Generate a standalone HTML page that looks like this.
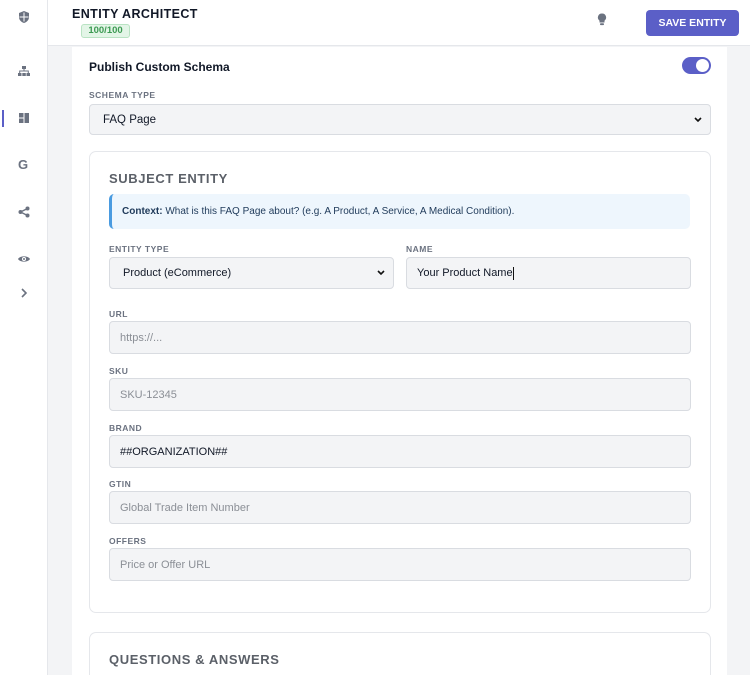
<!DOCTYPE html>
<html style="overflow:hidden;width:750px;height:675px"><head><style>
*{box-sizing:border-box;margin:0;padding:0}
body{width:750px;height:675px;overflow:hidden;background:#f3f4f6;font-family:"Liberation Sans",sans-serif;position:relative;color:#1f2937}
.sb{position:absolute;left:0;top:0;width:48px;height:675px;background:#fff;border-right:1px solid #e5e7eb}
.ic{position:absolute;left:17px;width:14px;height:14px;color:#6b7280}
.hd{position:absolute;left:48px;top:0;width:702px;height:46px;background:#fff;border-bottom:1px solid #e5e7eb}
.panel{position:absolute;left:72px;top:47px;width:655px;height:628px;background:#fff}
.abs{position:absolute}
.lbl{position:absolute;font-size:8.5px;font-weight:bold;color:#6b7280;letter-spacing:.5px}
.in{position:absolute;background:#f3f4f6;border:1px solid #d9dce1;border-radius:4px;font-size:11px;padding-left:10px;display:flex;align-items:center;color:#8b8f96}
.card{position:absolute;border:1px solid #e5e7eb;border-radius:7px;background:#fff}
.chev{position:absolute;right:8px;top:50%;margin-top:-3px}
</style></head><body>
<div class="sb">
<svg class="ic" style="top:10px" viewBox="0 0 14 14"><path d="M7 1L2 3v4c0 3 2.2 5 5 6 2.8-1 5-3 5-6V3z" fill="#6b7280"/><path d="M7 2.5v9M2.5 7h9" stroke="#fff" stroke-width="1"/></svg>
<svg class="ic" style="top:64px" viewBox="0 0 14 14" fill="#6b7280"><rect x="5" y="2" width="4" height="3"/><rect x="1" y="9" width="3.5" height="3"/><rect x="5.3" y="9" width="3.5" height="3"/><rect x="9.5" y="9" width="3.5" height="3"/><path d="M7 5v2M2.7 9V7h8.6v2" stroke="#6b7280" fill="none"/></svg>
<div class="abs" style="left:2px;top:110px;width:2px;height:17px;background:#5b5fc7"></div>
<svg class="ic" style="top:111px" viewBox="0 0 14 14" fill="#6b7280"><rect x="2" y="2" width="4.5" height="4.5"/><rect x="7.5" y="2" width="4.5" height="10"/><rect x="2" y="7.5" width="4.5" height="4.5"/></svg>
<div class="abs" style="left:18px;top:157px;font-size:13px;font-weight:bold;color:#6b7280">G</div>
<svg class="ic" style="top:205px" viewBox="0 0 14 14" fill="#6b7280"><circle cx="3.5" cy="7" r="2"/><circle cx="10.5" cy="3.5" r="2"/><circle cx="10.5" cy="10.5" r="2"/><path d="M3.5 7l7-3.5M3.5 7l7 3.5" stroke="#6b7280" stroke-width="1.3"/></svg>
<svg class="ic" style="top:252px" viewBox="0 0 14 14"><path d="M1 7c2-3.5 10-3.5 12 0-2 3.5-10 3.5-12 0z" fill="#6b7280"/><circle cx="7" cy="7" r="2" fill="#fff"/><circle cx="7" cy="7" r="1" fill="#6b7280"/></svg>
<svg class="ic" style="top:286px" viewBox="0 0 14 14"><path d="M5 3l4 4-4 4" stroke="#6b7280" stroke-width="1.6" fill="none"/></svg>
</div>
<div class="hd">
<div class="abs" style="left:24px;top:7px;font-size:12.5px;font-weight:bold;letter-spacing:.4px;color:#111827">ENTITY ARCHITECT</div>
<div class="abs" style="left:33px;top:24px;width:49px;height:14px;background:#e3f5e7;border:1px solid #b9e3c3;border-radius:3px;font-size:9.5px;font-weight:bold;color:#3c9a52;text-align:center;line-height:12px">100/100</div>
<svg class="abs" style="left:549px;top:13px" width="10" height="13" viewBox="0 0 10 13"><path d="M5 0.5a4 4 0 0 0-2.5 7.2V9.5h5V7.7A4 4 0 0 0 5 .5z" fill="#6b7280"/><rect x="3" y="10.3" width="4" height="1.8" rx=".8" fill="#6b7280"/></svg>
<div class="abs" style="left:598px;top:10px;width:93px;height:26px;background:#5b5fc7;border-radius:4px;color:#fff;font-size:10.5px;font-weight:bold;text-align:center;line-height:26px">SAVE ENTITY</div>
</div>
<div class="panel"></div>
<div class="abs" style="left:89px;top:60px;font-size:12px;font-weight:bold;color:#111827">Publish Custom Schema</div>
<div class="abs" style="left:682px;top:57px;width:29px;height:17px;border-radius:9px;background:#5b5fc7"><div class="abs" style="left:14px;top:2px;width:13px;height:13px;border-radius:50%;background:#fff"></div></div>
<div class="lbl" style="left:89px;top:90px">SCHEMA TYPE</div>
<div class="in" style="left:89px;top:104px;width:622px;height:31px;color:#111827;padding-left:13px;font-size:11.5px">FAQ Page<svg class="chev" width="8" height="6"><path d="M1 1l3 3 3-3" stroke="#111" stroke-width="1.6" fill="none"/></svg></div>
<div class="card" style="left:89px;top:151px;width:622px;height:462px"></div>
<div class="abs" style="left:109px;top:171px;font-size:13px;font-weight:bold;color:#5b6068;letter-spacing:.6px">SUBJECT ENTITY</div>
<div class="abs" style="left:109px;top:194px;width:581px;height:35px;background:#eef6fd;border-left:3px solid #4a9be0;border-radius:5px;font-size:10px;color:#1f3a5a;padding-left:10px;line-height:35px"><b>Context:</b> What is this FAQ Page about? (e.g. A Product, A Service, A Medical Condition).</div>
<div class="lbl" style="left:109px;top:244px">ENTITY TYPE</div>
<div class="in" style="left:109px;top:257px;width:285px;height:32px;color:#111827;padding-left:13px">Product (eCommerce)<svg class="chev" width="8" height="6"><path d="M1 1l3 3 3-3" stroke="#111" stroke-width="1.6" fill="none"/></svg></div>
<div class="lbl" style="left:406px;top:244px">NAME</div>
<div class="in" style="left:406px;top:257px;width:285px;height:32px;color:#111827">Your Product Name<span style="display:inline-block;width:1px;height:13px;background:#111"></span></div>
<div class="lbl" style="left:109px;top:309px">URL</div>
<div class="in" style="left:109px;top:321px;width:582px;height:33px">https://...</div>
<div class="lbl" style="left:109px;top:366px">SKU</div>
<div class="in" style="left:109px;top:378px;width:582px;height:33px">SKU-12345</div>
<div class="lbl" style="left:109px;top:423px">BRAND</div>
<div class="in" style="left:109px;top:435px;width:582px;height:33px;color:#111827">##ORGANIZATION##</div>
<div class="lbl" style="left:109px;top:479px">GTIN</div>
<div class="in" style="left:109px;top:491px;width:582px;height:33px">Global Trade Item Number</div>
<div class="lbl" style="left:109px;top:536px">OFFERS</div>
<div class="in" style="left:109px;top:548px;width:582px;height:33px">Price or Offer URL</div>
<div class="card" style="left:89px;top:632px;width:622px;height:50px;border-bottom:none;border-radius:7px 7px 0 0;height:43px"></div>
<div class="abs" style="left:109px;top:652px;font-size:13px;font-weight:bold;color:#5b6068;letter-spacing:.6px">QUESTIONS &amp; ANSWERS</div>
</body></html>
